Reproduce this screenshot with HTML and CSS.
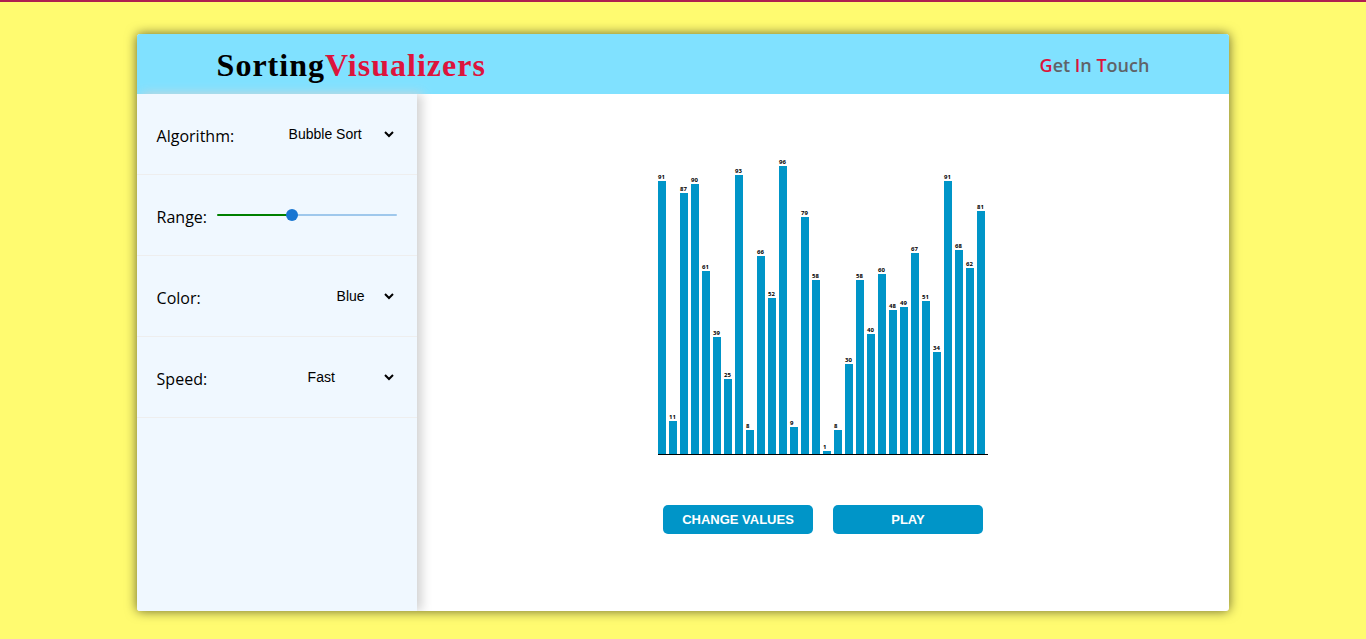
FILE: index.html
```html
<!DOCTYPE html>
<html lang="en">
<head>
<meta charset="utf-8">
<title>Sorting Visualizers</title>
<link rel="stylesheet" href="styles.css">
</head>
<body>
<div class="card">
  <header class="header">
    <h1 class="logo">Sorting<span class="accent">Visualizers</span></h1>
    <a class="contact" href="#contact"><span class="accent">G</span>et <span class="accent">I</span>n <span class="accent">T</span>ouch</a>
  </header>
  <div class="content">
    <aside class="sidebar">
      <div class="field">
        <label class="field-label" for="algorithm">Algorithm:</label>
        <select class="select select-wide" id="algorithm"><option>Bubble Sort</option><option>Merge Sort</option><option>Quick Sort</option></select>
      </div>
      <div class="field">
        <label class="field-label" for="range">Range:</label>
        <input class="slider" id="range" type="range" min="2" max="70" value="30">
      </div>
      <div class="field">
        <label class="field-label" for="color">Color:</label>
        <select class="select select-narrow" id="color"><option>Blue</option><option>Red</option></select>
      </div>
      <div class="field">
        <label class="field-label" for="speed">Speed:</label>
        <select class="select select-medium" id="speed"><option>Fast</option><option>Normal</option><option>Slow</option></select>
      </div>
    </aside>
    <main class="main">
      <div class="chart">
        <div class="bar" style="height:273px"><span class="value">91</span></div>
        <div class="bar" style="height:33px"><span class="value">11</span></div>
        <div class="bar" style="height:261px"><span class="value">87</span></div>
        <div class="bar" style="height:270px"><span class="value">90</span></div>
        <div class="bar" style="height:183px"><span class="value">61</span></div>
        <div class="bar" style="height:117px"><span class="value">39</span></div>
        <div class="bar" style="height:75px"><span class="value">25</span></div>
        <div class="bar" style="height:279px"><span class="value">93</span></div>
        <div class="bar" style="height:24px"><span class="value">8</span></div>
        <div class="bar" style="height:198px"><span class="value">66</span></div>
        <div class="bar" style="height:156px"><span class="value">52</span></div>
        <div class="bar" style="height:288px"><span class="value">96</span></div>
        <div class="bar" style="height:27px"><span class="value">9</span></div>
        <div class="bar" style="height:237px"><span class="value">79</span></div>
        <div class="bar" style="height:174px"><span class="value">58</span></div>
        <div class="bar" style="height:3px"><span class="value">1</span></div>
        <div class="bar" style="height:24px"><span class="value">8</span></div>
        <div class="bar" style="height:90px"><span class="value">30</span></div>
        <div class="bar" style="height:174px"><span class="value">58</span></div>
        <div class="bar" style="height:120px"><span class="value">40</span></div>
        <div class="bar" style="height:180px"><span class="value">60</span></div>
        <div class="bar" style="height:144px"><span class="value">48</span></div>
        <div class="bar" style="height:147px"><span class="value">49</span></div>
        <div class="bar" style="height:201px"><span class="value">67</span></div>
        <div class="bar" style="height:153px"><span class="value">51</span></div>
        <div class="bar" style="height:102px"><span class="value">34</span></div>
        <div class="bar" style="height:273px"><span class="value">91</span></div>
        <div class="bar" style="height:204px"><span class="value">68</span></div>
        <div class="bar" style="height:186px"><span class="value">62</span></div>
        <div class="bar" style="height:243px"><span class="value">81</span></div>
      </div>
      <div class="actions">
        <button class="button" type="button">CHANGE VALUES</button>
        <button class="button" type="button">PLAY</button>
      </div>
    </main>
  </div>
</div>
</body>
</html>
```
FILE: styles.css
```css
* { box-sizing: border-box; }

body {
  margin: 0;
  min-height: 100vh;
  padding: 32px 0 28px;
  border-top: 2px solid #ae1f50;
  background: #fffb70;
  display: flex;
  justify-content: center;
  font-family: "Open Sans", "Noto Sans", sans-serif;
  color: #000;
}

.card {
  width: 80%;
  display: flex;
  flex-direction: column;
  background: #fff;
  border-radius: 3px;
  overflow: hidden;
  box-shadow: 0 0 12px rgba(0, 0, 0, 0.6);
}

.header {
  height: 60px;
  padding: 2px 80px 0;
  display: flex;
  align-items: center;
  justify-content: space-between;
  background: #80e1ff;
}

.logo {
  margin: 0;
  font: bold 32px/40px "Liberation Serif", serif;
  letter-spacing: 1px;
}

.accent { color: crimson; }

.contact {
  font-size: 18px;
  font-weight: 600;
  color: #5f6368;
  text-decoration: none;
}

.content {
  flex: 1;
  display: flex;
}

.sidebar {
  width: 280px;
  background: #f0f8ff;
  box-shadow: 5px 0 10px lightgrey;
}

.field {
  height: 81px;
  padding: 0 20px;
  display: flex;
  align-items: center;
  justify-content: space-between;
  border-bottom: 1px solid #eee;
}

.field-label {
  padding-top: 4px;
  font-size: 16px;
}

.select {
  height: 24px;
  padding: 0;
  border: 0;
  background: transparent;
  color: #000;
  font: 14px "Liberation Sans", sans-serif;
}

.select-wide { width: 112px; }
.select-medium { width: 93px; }
.select-narrow { width: 64px; }

.slider {
  appearance: none;
  width: 180px;
  height: 2px;
  margin: 0;
  border-radius: 1px;
  background: linear-gradient(to right, green 41%, #9fc8ec 41%);
}

.slider::-webkit-slider-thumb {
  appearance: none;
  width: 12px;
  height: 12px;
  border-radius: 50%;
  background: #1976d2;
}

.main {
  flex: 1;
  padding-top: 60px;
  display: flex;
  flex-direction: column;
  align-items: center;
  gap: 50px;
}

.chart {
  height: 301px;
  padding-right: 3px;
  display: flex;
  align-items: flex-end;
  gap: 3px;
  border-bottom: 1px solid #000;
}

.bar {
  position: relative;
  width: 8px;
  background: #0095c8;
}

.value {
  position: absolute;
  left: 0;
  bottom: 100%;
  font-size: 6px;
  font-weight: 700;
  line-height: 8px;
}

.actions {
  display: flex;
  gap: 20px;
}

.button {
  width: 150px;
  height: 29px;
  padding: 0;
  border: 0;
  border-radius: 5px;
  background: #0095c8;
  color: #fff;
  font: bold 13px "Liberation Sans", sans-serif;
}
```
